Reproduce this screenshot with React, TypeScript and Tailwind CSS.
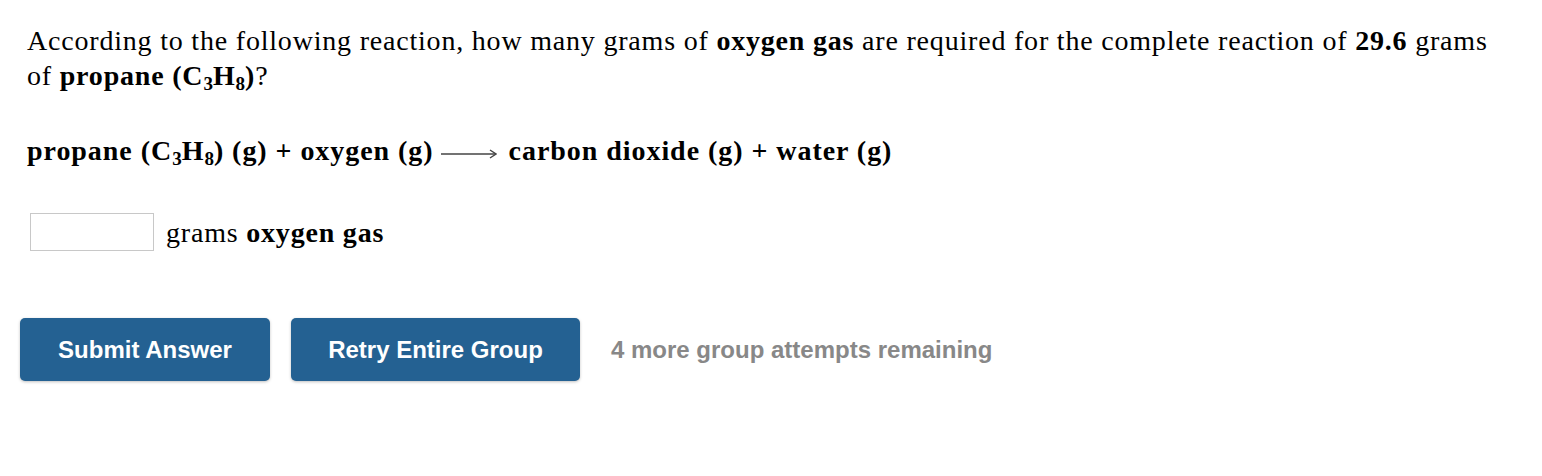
import React from 'react';

const Sub = ({ children }: { children: React.ReactNode }) => (
  <sub className="relative top-[0.28em] align-baseline text-[0.68em] leading-none tracking-normal">{children}</sub>
);

const Arrow = () => (
  <svg width="56" height="12" viewBox="0 0 56 12" className="ml-[7px] mr-[12px] inline-block align-middle">
    <line x1="0" y1="6" x2="54" y2="6" stroke="#444" strokeWidth="1.4" />
    <path d="M49 2 L55 6 L49 10" fill="none" stroke="#444" strokeWidth="1.4" />
  </svg>
);

export default function App() {
  return (
    <div className="min-h-[476px] w-full bg-white font-['Liberation_Serif',serif] text-black">
      <div className="pl-[27px] pr-[40px] pt-[23px]">
        <p className="text-[28px] leading-[35px] tracking-[0.8px]">
          According to the following reaction, how many grams of <b>oxygen gas</b> are required for the complete reaction of <b>29.6</b> grams of{' '}
          <b>
            propane (C<Sub>3</Sub>H<Sub>8</Sub>)
          </b>
          ?
        </p>

        <p className="mt-[40px] text-[28px] leading-[35px] tracking-[0.95px] font-bold">
          propane (C<Sub>3</Sub>H<Sub>8</Sub>) (g) + oxygen (g)
          <Arrow />
          carbon dioxide (g) + water (g)
        </p>

        <div className="mt-[45px] flex items-center gap-[12px] pl-[3px]">
          <input
            type="text"
            className="h-[38px] w-[124px] border border-[#c8c8c8] bg-white outline-none"
          />
          <span className="text-[28px] leading-[35px] tracking-[0.8px]">
            grams <b>oxygen gas</b>
          </span>
        </div>

        <div className="ml-[-7px] mt-[67px] flex items-center gap-[21px] font-['Liberation_Sans',Arial,sans-serif]">
          <button className="h-[63px] w-[250px] rounded-[5px] bg-[#246192] text-[24px] font-bold text-white shadow-[0_1px_3px_rgba(0,0,0,0.25)]">
            Submit Answer
          </button>
          <button className="h-[63px] w-[289px] rounded-[5px] bg-[#246192] text-[24px] font-bold text-white shadow-[0_1px_3px_rgba(0,0,0,0.25)]">
            Retry Entire Group
          </button>
          <span className="ml-[10px] text-[24px] font-bold text-[#888888]">4 more group attempts remaining</span>
        </div>
      </div>
    </div>
  );
}
